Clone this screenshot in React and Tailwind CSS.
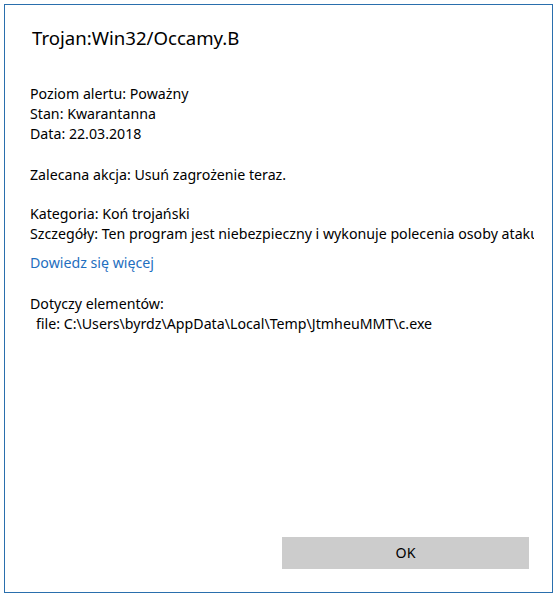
export default function App() {
    // Windows Defender threat details dialog
    return (
        <div className="w-[556px] h-[602px] bg-white pt-[4px] pl-[4px]" style={{ fontFamily: '"Noto Sans", "Open Sans", sans-serif' }}>
            <div className="w-[549px] h-[589px] border border-[#2a6fad] flex flex-col text-black">
                <div className="pl-[25px] pt-[19px] w-[529px] overflow-hidden">
                    <h1 className="text-[18.6px] leading-[28px] pl-[2px]">Trojan:Win32/Occamy.B</h1>

                    <div className="mt-[32px] text-[14.2px] leading-[20px]">
                        <p>Poziom alertu: Poważny</p>
                        <p>Stan: Kwarantanna</p>
                        <p>Data: 22.03.2018</p>
                    </div>

                    <p className="mt-[21px] text-[14.2px] leading-[20px]">Zalecana akcja: Usuń zagrożenie teraz.</p>

                    <div className="mt-[19px] text-[14.2px] leading-[20px] whitespace-nowrap">
                        <p>Kategoria: Koń trojański</p>
                        <p>Szczegóły: Ten program jest niebezpieczny i wykonuje polecenia osoby atakującej.</p>
                    </div>

                    <p className="mt-[9px] text-[14.2px] leading-[20px] text-[#1f6fc0]">Dowiedz się więcej</p>

                    <div className="mt-[21px] text-[14.2px] leading-[20px]">
                        <p>Dotyczy elementów:</p>
                        <p className="pl-[6px]">file: C:\Users\byrdz\AppData\Local\Temp\JtmheuMMT\c.exe</p>
                    </div>
                </div>

                <button className="mt-auto self-end mr-[23px] mb-[23px] w-[247px] h-[32px] bg-[#cccccc] text-[14.2px] text-black">
                    OK
                </button>
            </div>
        </div>
    );
}
